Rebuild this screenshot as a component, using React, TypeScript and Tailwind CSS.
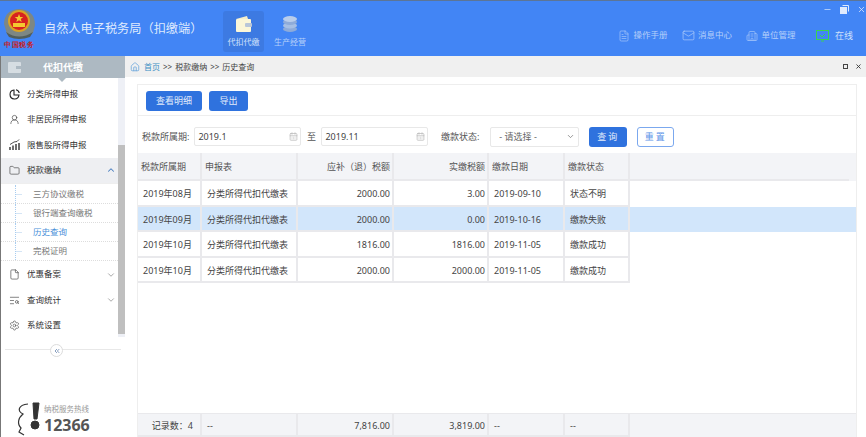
import {
  ChevronDown,
  ChevronUp,
  ChevronsLeft,
  CalendarDays,
  FileText,
  File,
  Folder,
  Home,
  Mail,
  Building2,
  Minus,
  Settings,
  X,
  UserRound,
  TextSearch,
} from "lucide-react";

const font = { fontFamily: '"Noto Sans", "Noto Sans CJK SC", sans-serif' };

const rows = [
  ["2019年08月", "分类所得代扣代缴表", "2000.00", "3.00", "2019-09-10", "状态不明"],
  ["2019年09月", "分类所得代扣代缴表", "2000.00", "0.00", "2019-10-16", "缴款失败"],
  ["2019年10月", "分类所得代扣代缴表", "1816.00", "1816.00", "2019-11-05", "缴款成功"],
  ["2019年10月", "分类所得代扣代缴表", "2000.00", "2000.00", "2019-11-05", "缴款成功"],
];

const grid = "grid grid-cols-[64px_96px_96px_95px_76px_65px_219px]";

function Emblem() {
  return (
    <div className="flex w-[36px] shrink-0 flex-col items-center">
      <svg width="33" height="32" viewBox="0 0 33 32">
        <path d="M1 16 C1 6 8 1 16 1 C25 1 32 6 32 17 L30 25 Q17 35 4 26 Z" fill="#7d8784" />
        <path d="M3 24 Q16 33 30 24 L27 29 Q16 33 6 29 Z" fill="#515d5b" />
        <circle cx="16" cy="13" r="11" fill="#dba324" />
        <circle cx="16" cy="13" r="9" fill="#d8231f" />
        <path d="M16 6 l1.2 3 3 .1 -2.4 1.9 .9 3 -2.7 -1.7 -2.7 1.7 .9 -3 -2.4 -1.9 3 -.1 Z" fill="#f4c930" />
        <rect x="10" y="15" width="12" height="4" fill="#f4c930" />
      </svg>
      <span className="mt-[1px] font-serif text-[6.5px] leading-[9px] font-bold tracking-[0.5px] whitespace-nowrap text-[#c8201c]">
        中国税务
      </span>
    </div>
  );
}

function TopLink({ icon, label }: { icon: React.ReactNode; label: string }) {
  return (
    <div className="flex items-center gap-[3px] text-[8.5px] text-[#b6d0fa]">
      {icon}
      <span>{label}</span>
    </div>
  );
}

function MenuItem({ icon, label, arrow, active }: { icon: React.ReactNode; label: string; arrow?: "up" | "down"; active?: boolean }) {
  return (
    <div className={`flex h-[25.4px] items-center pr-[2px] pl-[8px] text-[8.5px] text-[#333] ${active ? "bg-[#eeeff2]" : ""}`}>
      <span className="flex w-[18px] text-[#333]">{icon}</span>
      <span className="flex-1">{label}</span>
      {arrow === "up" && <ChevronUp size={10} color="#4a7fc0" strokeWidth={2.5} />}
      {arrow === "down" && <ChevronDown size={10} color="#999" />}
    </div>
  );
}

function SubItem({ label, active }: { label: string; active?: boolean }) {
  return (
    <div className={`flex h-[19px] items-center border-b border-dotted border-[#ddd] pl-[14px] text-[8.5px] ${active ? "text-[#4a90d9]" : "text-[#777]"}`}>
      <span className="h-full w-0 border-l border-dotted border-[#a8cdf0]" />
      <span className="h-0 w-[6px] border-t border-[#d5e5f5]" />
      <span className="ml-[11px]">{label}</span>
    </div>
  );
}

function DateField({ value }: { value: string }) {
  return (
    <div className="flex h-[19px] w-[107px] items-center justify-between rounded-[2px] border border-[#e8e8e8] pr-[2px] pl-[3px] text-[9px] text-[#444]">
      <span>{value}</span>
      <CalendarDays size={9} color="#bbb" />
    </div>
  );
}

function Cell({ children, right, header, className = "" }: { children?: React.ReactNode; right?: boolean; header?: boolean; className?: string }) {
  return (
    <div
      className={`flex items-center border-r-2 border-b-2 border-[#e9e9ec] pt-[2px] text-[9px] ${right ? "justify-end pr-[2px]" : header ? "pl-[3px]" : "pl-[5px]"} ${
        header ? "text-[#555]" : "text-[#444]"
      } ${className}`}
    >
      {children}
    </div>
  );
}

export default function App() {
  return (
    <div className="flex h-[437px] w-[866px] flex-col overflow-hidden bg-white" style={font}>
      <header className="flex h-[56px] shrink-0 items-start border-t border-[#5c7596] bg-[#4285f5]">
        <div className="mt-[7px] ml-[1px]">
          <Emblem />
        </div>
        <h1 className="mt-[18px] ml-[7px] w-[179px] text-[12.2px] leading-[20px] font-normal whitespace-nowrap text-[#dfeafd]">
          自然人电子税务局（扣缴端）
        </h1>
        <div className="mt-[10px] flex h-[41px] w-[41px] flex-col items-center justify-between rounded-[3px] bg-[#3d7ae2] py-[4px] text-[8px] text-[#cfe0fb]">
          <svg width="18" height="18" viewBox="0 0 18 18">
            <path d="M1 4 L12 1 L13 4 Z" fill="#f4eecb" />
            <rect x="1" y="4" width="15" height="13" rx="1" fill="#fbf6d8" />
            <rect x="10" y="8" width="7" height="4" rx="1" fill="#b9c6d8" />
          </svg>
          <span>代扣代缴</span>
        </div>
        <div className="mt-[10px] flex h-[41px] w-[52px] flex-col items-center justify-between py-[4px] text-[8px] text-[#b6d0fa]">
          <svg width="18" height="18" viewBox="0 0 18 18">
            <ellipse cx="9" cy="14" rx="7" ry="3" fill="#8eabd9" />
            <ellipse cx="9" cy="10.5" rx="7" ry="3" fill="#a6bfe4" />
            <ellipse cx="9" cy="7" rx="7" ry="3" fill="#8eabd9" />
            <ellipse cx="9" cy="4" rx="7" ry="3" fill="#b9cdeb" />
          </svg>
          <span>生产经营</span>
        </div>
        <div className="flex h-full flex-1 flex-col items-end">
          <div className="flex h-[12px] items-center gap-[8px] pt-[4px] text-white">
            <Minus size={9} color="#cfe0fb" />
            <svg width="9" height="9" viewBox="0 0 9 9" fill="none" stroke="#dfeafd">
              <rect x="0.5" y="2.5" width="6" height="6" fill="#dfeafd" />
              <path d="M2.5 0.5 H8.5 V6.5" />
            </svg>
            <X size={9} color="#dfeafd" />
          </div>
          <div className="mt-[16px] flex items-center gap-[14.5px] pr-[13px]">
            <TopLink icon={<FileText size={12} strokeWidth={1.2} />} label="操作手册" />
            <TopLink icon={<Mail size={13} strokeWidth={1.2} />} label="消息中心" />
            <TopLink icon={<Building2 size={12} strokeWidth={1.2} />} label="单位管理" />
            <div className="ml-[6px] flex items-center gap-[6px] text-[9px] text-[#cfe0fb]">
              <svg width="13" height="12" viewBox="0 0 13 12" fill="none" stroke="#39d353">
                <rect x="0.5" y="0.5" width="12" height="9" />
                <path d="M4 5 l2 2 l3 -3" />
                <path d="M5 11 h3" />
              </svg>
              <span>在线</span>
            </div>
          </div>
        </div>
      </header>

      <div className="flex min-h-0 flex-1">
        <aside className="flex w-[125px] shrink-0 flex-col border-l border-[#777]">
          <div className="relative flex h-[22px] shrink-0 items-center bg-[#adb9c2] text-[10px] font-bold text-white">
            <svg className="ml-[7px]" width="13" height="11" viewBox="0 0 13 11">
              <rect width="13" height="11" rx="1" fill="#d6dde2" />
              <rect x="8" y="4" width="5" height="3" fill="#adb9c2" />
            </svg>
            <span className="ml-[22px]">代扣代缴</span>
            <span className="absolute top-[22px] left-[57px] h-0 w-0 border-x-[4px] border-t-[4px] border-x-transparent border-t-[#adb9c2]" />
          </div>
          <div className="flex h-[259px] shrink-0">
            <nav className="min-w-0 flex-1 pt-[3.5px]">
              <MenuItem icon={<PieIcon />} label="分类所得申报" />
              <MenuItem icon={<UserRound size={11} strokeWidth={1.3} />} label="非居民所得申报" />
              <MenuItem icon={<BarsIcon />} label="限售股所得申报" />
              <MenuItem icon={<Folder size={11} strokeWidth={1.3} />} label="税款缴纳" arrow="up" active />
              <div className="border-t border-[#eee] pt-[1px] pb-[1px]">
                <SubItem label="三方协议缴税" />
                <SubItem label="银行端查询缴税" />
                <SubItem label="历史查询" active />
                <SubItem label="完税证明" />
              </div>
              <MenuItem icon={<File size={11} strokeWidth={1.3} />} label="优惠备案" arrow="down" />
              <MenuItem icon={<TextSearch size={11} strokeWidth={1.3} />} label="查询统计" arrow="down" />
              <MenuItem icon={<Settings size={11} strokeWidth={1.2} />} label="系统设置" />
            </nav>
            <div className="flex w-[7px] shrink-0 flex-col bg-[#eef0f6]">
              <div className="h-[67px]" />
              <div className="h-[189px] bg-[#bfbfbf]" />
            </div>
          </div>
          <div className="relative mx-[4px] mt-[12px] border-t border-[#e8e8e8]">
            <span className="absolute top-[-6px] left-[45px] flex h-[13px] w-[13px] items-center justify-center rounded-full border border-[#dcdcdc] bg-white">
              <ChevronsLeft size={8} color="#8aa0c0" strokeWidth={3} />
            </span>
          </div>
          <div className="mt-auto flex items-end pb-[1px] pl-[14px]">
            <svg width="27" height="34" viewBox="0 0 27 34" fill="none" stroke="#333">
              <path d="M13 2 C3 3 2 9 8 12 C3 16 2 22 6 26 L4 30 L9 33" strokeWidth="1.2" />
              <path d="M18 1 L24 1 L22 17 L19 17 Z" fill="#333" />
              <circle cx="20" cy="23" r="4" fill="#333" />
            </svg>
            <div className="ml-[2px] flex flex-col">
              <span className="text-[7.5px] leading-[10px] text-[#999]">纳税服务热线</span>
              <span className="text-[16px] leading-[22px] font-bold text-[#555]">12366</span>
            </div>
          </div>
        </aside>

        <main className="flex min-w-0 flex-1 flex-col">
          <div className="flex h-[21px] shrink-0 items-center bg-[#f0f0f0] pr-[4px] pl-[5px] text-[8px] text-[#444]">
            <Home size={10} color="#6fa8dc" />
            <span className="ml-[4px] text-[#3d8fc4]">首页</span>
            <span className="ml-[3px]">&gt;&gt;</span>
            <span className="ml-[3px]">税款缴纳</span>
            <span className="ml-[3px]">&gt;&gt;</span>
            <span className="ml-[3px]">历史查询</span>
            <span className="ml-auto flex items-center gap-[7px]">
              <span className="h-[5px] w-[5px] border border-[#444]" />
              <X size={7} color="#333" strokeWidth={3} />
            </span>
          </div>
          <div className="flex min-h-0 flex-1 pt-[7px] pr-[9px] pl-[12px]">
            <div className="flex min-w-0 flex-1 flex-col border-t border-r border-l border-[#eee] bg-white">
              <div className="flex h-[31px] shrink-0 items-start gap-[7px] border-b border-[#eee] pt-[6px] pl-[8px]">
                <button className="h-[20px] w-[56px] rounded-[3px] bg-[#2f72de] text-[9px] text-[#e2ecfb]">查看明细</button>
                <button className="h-[20px] w-[39px] rounded-[3px] bg-[#2f72de] text-[9px] text-[#e2ecfb]">导出</button>
              </div>
              <div className="flex h-[37px] shrink-0 items-center pt-[4px] pl-[4px] text-[9px] text-[#555]">
                <span className="whitespace-nowrap">税款所属期:</span>
                <span className="ml-[5px]">
                  <DateField value="2019.1" />
                </span>
                <span className="mx-[5.5px]">至</span>
                <DateField value="2019.11" />
                <span className="ml-[12.5px]">缴款状态:</span>
                <div className="ml-[11px] flex h-[20px] w-[89px] items-center justify-between rounded-[2px] border border-[#e8e8e8] pr-[3px] pl-[8px] text-[#666]">
                  <span>- 请选择 -</span>
                  <ChevronDown size={9} color="#777" />
                </div>
                <button className="ml-[10px] h-[20px] w-[38px] rounded-[3px] bg-[#2f72de] text-[9px] tracking-[2px] text-[#e2ecfb]">查询</button>
                <button className="ml-[10px] h-[20px] w-[37px] rounded-[3px] border border-[#7ba8ee] bg-white text-[9px] tracking-[2px] text-[#5f95e8]">重置</button>
              </div>
              <div className="flex min-h-0 flex-1 flex-col">
                <div className={`${grid} h-[28px] shrink-0 bg-[#f3f4f7]`}>
                  <Cell header>税款所属期</Cell>
                  <Cell header>申报表</Cell>
                  <Cell header right>应补（退）税额</Cell>
                  <Cell header right>实缴税额</Cell>
                  <Cell header>缴款日期</Cell>
                  <Cell header>缴款状态</Cell>
                  <div className="border-b-2 border-[#e9e9ec]" />
                </div>
                {rows.map((r, i) => (
                  <div key={i} className={`${grid} h-[25.5px] shrink-0 ${i === 1 ? "bg-[#d2e6fb]" : ""}`}>
                    <Cell>{r[0]}</Cell>
                    <Cell>{r[1]}</Cell>
                    <Cell right>{r[2]}</Cell>
                    <Cell right>{r[3]}</Cell>
                    <Cell>{r[4]}</Cell>
                    <Cell>{r[5]}</Cell>
                  </div>
                ))}
                <div className={`${grid} mt-auto h-[24px] shrink-0 border-t border-[#e9e9ec] bg-[#f3f4f7]`}>
                  <Cell className="justify-end border-b-0 pr-[7px]">记录数：4</Cell>
                  <Cell className="border-b-0">--</Cell>
                  <Cell right className="border-b-0">7,816.00</Cell>
                  <Cell right className="border-b-0">3,819.00</Cell>
                  <Cell className="border-b-0">--</Cell>
                  <Cell className="border-b-0">--</Cell>
                </div>
              </div>
            </div>
          </div>
        </main>
      </div>
    </div>
  );
}

function PieIcon() {
  return (
    <svg width="11" height="11" viewBox="0 0 11 11" fill="none" stroke="#222" strokeWidth="1.1">
      <path d="M5 1 A4.5 4.5 0 1 0 10 6 L5 6 Z" />
      <path d="M7 0.8 A4 4 0 0 1 10.2 4" />
    </svg>
  );
}

function BarsIcon() {
  return (
    <svg width="11" height="11" viewBox="0 0 11 11" fill="none" stroke="#222">
      <path d="M1 11 V8 M4 11 V6.5 M7 11 V5 M10 11 V4" strokeWidth="1.3" />
      <path d="M1 5.5 L5 3 L8 2.5 L10 0.5" strokeWidth="0.8" />
    </svg>
  );
}
